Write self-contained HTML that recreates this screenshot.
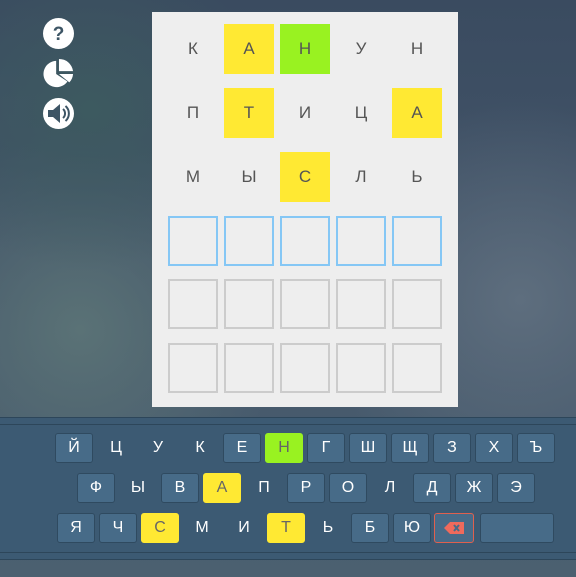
<!DOCTYPE html>
<html><head><meta charset="utf-8"><style>
*{margin:0;padding:0;box-sizing:border-box}
body{width:576px;height:577px;overflow:hidden;position:relative;font-family:"Liberation Sans","DejaVu Sans",sans-serif;
background:radial-gradient(ellipse 180px 160px at 90px 110px,#3d5a60 0%,rgba(61,90,96,0) 100%),radial-gradient(ellipse 200px 200px at 80px 330px,#5a7276 0%,rgba(90,114,118,0) 100%),radial-gradient(ellipse 200px 200px at 520px 300px,#5e6e7e 0%,rgba(94,110,126,0) 100%),linear-gradient(180deg,#3a4b60 0%,#44566a 50%,#4b6070 100%)}
.ic{position:absolute;left:43px;width:31px;height:31px}
.panel{position:absolute;left:152px;top:12px;width:306px;height:395px;background:#eeeeee}
.t{position:absolute;width:50px;height:50px;display:flex;align-items:center;justify-content:center;font-size:17px;color:#555}
.e{border:2px solid #cccccc}.b{border:2px solid #85c7f5}
.y{background:#ffe933}.g{background:#99f221}
.kb{position:absolute;left:0;top:417px;width:576px;height:143px;background:#3c5a73;border-top:1px solid #2d465a;border-bottom:1px solid #2d465a}
.l1{position:absolute;left:0;top:424px;width:576px;height:1px;background:#2d465a}
.l2{position:absolute;left:0;top:552px;width:576px;height:1px;background:#2d465a}
.k{position:absolute;width:38px;height:30px;border-radius:3px;background:#476b88;border:1px solid #2f4a60;color:#fff;font-size:16px;display:flex;align-items:center;justify-content:center}
.k.n{background:none;border-color:transparent}
.k.y{background:#ffe933;border-color:#ffe933;color:#666}
.k.g{background:#99f221;border-color:#99f221;color:#666}
</style></head><body>
<svg class="ic" style="top:18px" viewBox="0 0 31 31"><circle cx="15.5" cy="15.5" r="15.5" fill="#fff"/><text x="15.5" y="22" font-size="19" font-weight="bold" text-anchor="middle" fill="#3d5565" font-family="Liberation Sans">?</text></svg>
<svg class="ic" style="top:58px" viewBox="0 0 33 31"><path d="M14 2 A14 14 0 1 0 26 24 L14 16 Z" fill="#fff"/><path d="M17 0 L17 13 L32 13 A15 15 0 0 0 17 0Z" fill="#fff"/><path d="M17 16 L32 16 A15 15 0 0 1 28 25 Z" fill="#fff"/></svg>
<svg class="ic" style="top:98px" viewBox="0 0 31 31"><circle cx="15.5" cy="15.5" r="15.5" fill="#fff"/><path d="M5 12h5l7-6v19l-7-6H5z" fill="#3d5565"/><path d="M20 11a6 6 0 0 1 0 9M22.5 8a10 10 0 0 1 0 15" stroke="#3d5565" stroke-width="2" fill="none"/></svg>
<div class="panel"></div>
<div id="tiles"></div>
<div class="kb"></div><div class="l1"></div><div class="l2"></div>
<div id="keys"></div>
<script>
var rows=[["К","А","Н","У","Н"],["П","Т","И","Ц","А"],["М","Ы","С","Л","Ь"]];
var cls=[["","y","g","",""],["","y","","","y"],["","","y","",""]];
var ty=[24,88,152,216,279,343],h="";
for(var r=0;r<6;r++)for(var c=0;c<5;c++){var x=168+c*56,cl,tx="";
if(r<3){cl=cls[r][c];tx=rows[r][c]}else cl=r==3?"b":"e";
h+='<div class="t '+cl+'" style="left:'+x+'px;top:'+ty[r]+'px">'+tx+'</div>'}
document.getElementById("tiles").innerHTML=h;
var K=[[55,433,"Й","","Ц","n","У","n","К","n","Е","","Н","g","Г","","Ш","","Щ","","З","","Х","","Ъ",""],
[77,473,"Ф","","Ы","n","В","","А","y","П","n","Р","","О","","Л","n","Д","","Ж","","Э",""],
[57,513,"Я","","Ч","","С","y","М","n","И","n","Т","y","Ь","n","Б","","Ю",""]];
h="";
K.forEach(function(a){for(var i=2,j=0;i<a.length;i+=2,j++)h+='<div class="k '+a[i+1]+'" style="left:'+(a[0]+j*42)+'px;top:'+a[1]+'px">'+a[i]+'</div>'});
h+='<div class="k" style="left:434px;top:513px;width:40px;border-color:#e0604e"><svg width="20" height="12" viewBox="0 0 20 12"><path d="M6 0h14v12H6L0 6z" fill="#ef6a5c"/><path d="M10 3l5 6M15 3l-5 6" stroke="#476b88" stroke-width="2"/></svg></div>';
h+='<div class="k" style="left:480px;top:513px;width:74px"></div>';
document.getElementById("keys").innerHTML=h;
</script>
</body></html>
